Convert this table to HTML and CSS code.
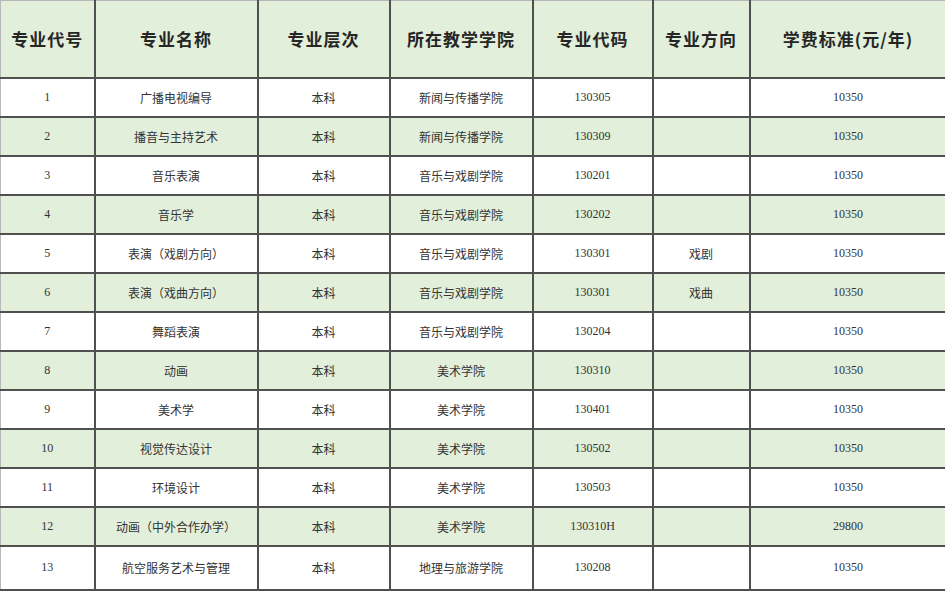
FILE: index.html
```html
<!DOCTYPE html>
<html lang="zh-CN">
<head>
<meta charset="utf-8">
<link rel="stylesheet" href="styles.css">
</head>
<body>
<table class="fees">
  <colgroup>
    <col class="c1"><col class="c2"><col class="c3"><col class="c4"><col class="c5"><col class="c6"><col class="c7">
  </colgroup>
  <thead>
    <tr class="head">
      <th>专业代号</th><th>专业名称</th><th>专业层次</th><th>所在教学学院</th><th>专业代码</th><th>专业方向</th><th>学费标准(元/年)</th>
    </tr>
  </thead>
  <tbody>
    <tr><td class="num">1</td><td>广播电视编导</td><td>本科</td><td>新闻与传播学院</td><td class="num">130305</td><td></td><td class="num">10350</td></tr>
    <tr class="alt"><td class="num">2</td><td>播音与主持艺术</td><td>本科</td><td>新闻与传播学院</td><td class="num">130309</td><td></td><td class="num">10350</td></tr>
    <tr><td class="num">3</td><td>音乐表演</td><td>本科</td><td>音乐与戏剧学院</td><td class="num">130201</td><td></td><td class="num">10350</td></tr>
    <tr class="alt"><td class="num">4</td><td>音乐学</td><td>本科</td><td>音乐与戏剧学院</td><td class="num">130202</td><td></td><td class="num">10350</td></tr>
    <tr><td class="num">5</td><td>表演（戏剧方向）</td><td>本科</td><td>音乐与戏剧学院</td><td class="num">130301</td><td>戏剧</td><td class="num">10350</td></tr>
    <tr class="alt"><td class="num">6</td><td>表演（戏曲方向）</td><td>本科</td><td>音乐与戏剧学院</td><td class="num">130301</td><td>戏曲</td><td class="num">10350</td></tr>
    <tr><td class="num">7</td><td>舞蹈表演</td><td>本科</td><td>音乐与戏剧学院</td><td class="num">130204</td><td></td><td class="num">10350</td></tr>
    <tr class="alt"><td class="num">8</td><td>动画</td><td>本科</td><td>美术学院</td><td class="num">130310</td><td></td><td class="num">10350</td></tr>
    <tr><td class="num">9</td><td>美术学</td><td>本科</td><td>美术学院</td><td class="num">130401</td><td></td><td class="num">10350</td></tr>
    <tr class="alt"><td class="num">10</td><td>视觉传达设计</td><td>本科</td><td>美术学院</td><td class="num">130502</td><td></td><td class="num">10350</td></tr>
    <tr><td class="num">11</td><td>环境设计</td><td>本科</td><td>美术学院</td><td class="num">130503</td><td></td><td class="num">10350</td></tr>
    <tr class="alt"><td class="num">12</td><td>动画（中外合作办学）</td><td>本科</td><td>美术学院</td><td class="num">130310H</td><td></td><td class="num">29800</td></tr>
    <tr class="last"><td class="num">13</td><td>航空服务艺术与管理</td><td>本科</td><td>地理与旅游学院</td><td class="num">130208</td><td></td><td class="num">10350</td></tr>
  </tbody>
</table>
</body>
</html>
```

FILE: styles.css
```css
html, body {
  margin: 0;
  padding: 0;
  background: #ffffff;
}

.fees {
  width: 946px;
  table-layout: fixed;
  border-collapse: collapse;
  font-family: "Noto Sans CJK SC", "Noto Sans", sans-serif;
  color: #333333;
}

.c1 { width: 94px; }
.c2 { width: 163px; }
.c3 { width: 132px; }
.c4 { width: 143px; }
.c5 { width: 120px; }
.c6 { width: 97px; }
.c7 { width: 197px; }

.fees th,
.fees td {
  border: 2px solid #505050;
  text-align: center;
  vertical-align: middle;
  padding: 0;
}

.fees tr > :first-child {
  border-left: 1px solid #b8b8b8;
}

.fees thead th {
  border-top: 1px solid #b8b8b8;
}

.head {
  height: 77px;
  background: #e2efda;
}

.head th {
  font-family: "Noto Sans CJK SC", sans-serif;
  font-weight: 700;
  font-size: 17px;
  letter-spacing: 1px;
  color: #262626;
}

.fees tbody tr {
  height: 39px;
}

.fees tbody tr.last {
  height: 44px;
}

.fees td {
  font-size: 12px;
  font-weight: 400;
}

.fees td.num {
  font-family: "Liberation Serif", serif;
  font-size: 12px;
}

.alt {
  background: #e2efda;
}
```
